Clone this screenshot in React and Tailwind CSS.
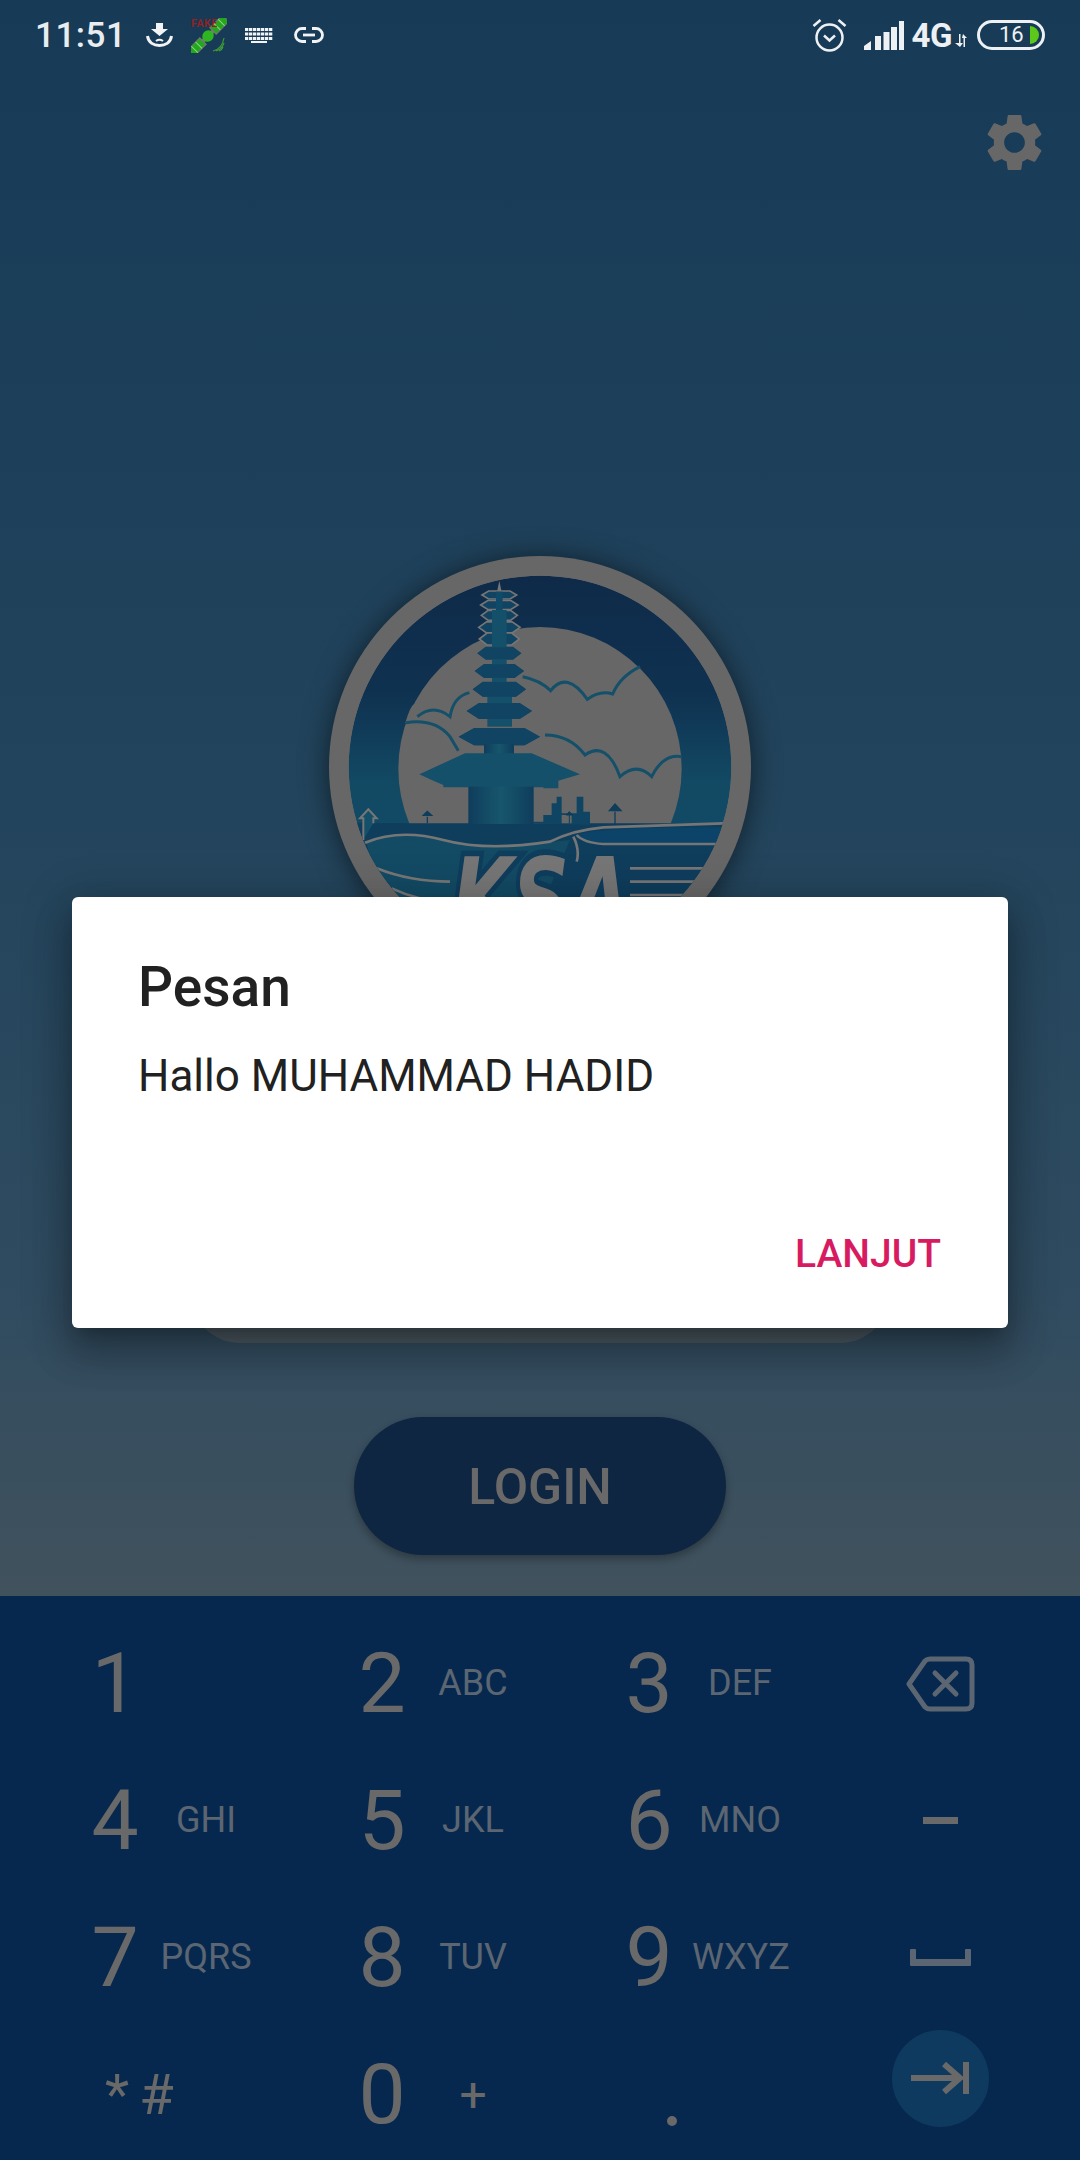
import React from "react";

const GEAR =
  "M19.14 12.94c.04-.3.06-.61.06-.94 0-.32-.02-.64-.07-.94l2.03-1.58c.18-.14.23-.41.12-.61l-1.92-3.32c-.12-.22-.37-.29-.59-.22l-2.39.96c-.5-.38-1.03-.7-1.62-.94l-.36-2.54c-.04-.24-.24-.41-.48-.41h-3.84c-.24 0-.43.17-.47.41l-.36 2.54c-.59.24-1.13.57-1.62.94l-2.39-.96c-.22-.08-.47 0-.59.22L2.74 8.87c-.12.21-.08.47.12.61l2.03 1.58c-.05.3-.09.63-.09.94s.02.64.07.94l-2.03 1.58c-.18.14-.23.41-.12.61l1.92 3.32c.12.22.37.29.59.22l2.39-.96c.5.38 1.03.7 1.62.94l.36 2.54c.05.24.24.41.48.41h3.84c.24 0 .44-.17.47-.41l.36-2.54c.59-.24 1.13-.56 1.62-.94l2.39.96c.22.08.47 0 .59-.22l1.92-3.32c.12-.22.07-.47-.12-.61l-2.01-1.58zM12 15.6c-1.98 0-3.6-1.62-3.6-3.6s1.62-3.6 3.6-3.6 3.6 1.62 3.6 3.6-1.62 3.6-3.6 3.6z";

const TIERS = [
  [165, 52],
  [195, 56],
  [226, 54],
  [262, 62],
  [297, 60],
  [340, 66],
  [393, 74],
  [448, 80],
  [513, 98],
  [590, 122],
];

function DownloadIcon() {
  return (
    <svg width="27" height="24" viewBox="0 0 27 24" className="ml-[20px]">
      <path d="M10 0h7v6h5l-8.500 7L5 6h5z" fill="#f1f3f5" />
      <path d="M1.500 13C2.500 20 8 22.500 13.500 22.500S24.500 20 25.500 13" fill="none" stroke="#f1f3f5" strokeWidth="3" />
      <path d="M10 18q3.500-2.500 7 0" fill="none" stroke="#f1f3f5" strokeWidth="2" />
    </svg>
  );
}

function FakeGpsIcon() {
  return (
    <svg width="36" height="35" viewBox="0 0 36 35" className="ml-[18px]">
      <g transform="rotate(-45 17 18)">
        <rect x="-8" y="13.500" width="18" height="9" fill="#23a81c" stroke="#777" strokeWidth="1" />
        <rect x="24" y="13.500" width="18" height="9" fill="#23a81c" stroke="#777" strokeWidth="1" />
        <path d="M-2 13.500v9M4 13.500v9M30 13.500v9M36 13.500v9" stroke="#8fd98a" strokeWidth="1" />
        <rect x="9" y="16" width="16" height="4" fill="#777" />
        <ellipse cx="17" cy="18" rx="6" ry="5.500" fill="#2fb522" />
      </g>
      <text x="0" y="9" fontSize="10.500" fontWeight="700" letterSpacing="0.600" fill="#8f2222">
        FAKE
      </text>
      <path d="M22 33q9-2 11-13M25 33q6-2 8-8M28 33q3-1 4-4" fill="none" stroke="#3f9a35" strokeWidth="1.200" />
    </svg>
  );
}

function KeyboardIcon() {
  const rows = [0, 4.500, 9];
  return (
    <svg width="28" height="15" viewBox="0 0 28 15" className="ml-[18px]" fill="#f1f3f5">
      {rows.map((y) =>
        [0, 4, 8, 12, 16, 20, 24].map((x) => <rect key={`${x}-${y}`} x={x} y={y} width="3.300" height="3" />)
      )}
      <rect x="6" y="13" width="16" height="2" />
    </svg>
  );
}

function LinkIcon() {
  return (
    <svg width="30" height="16" viewBox="0 0 30 16" className="ml-[21px]" fill="none" stroke="#f1f3f5" strokeWidth="2.800">
      <path d="M12 1.500H8a6.500 6.500 0 0 0 0 13h4" />
      <path d="M18 1.500h4a6.500 6.500 0 0 1 0 13h-4" />
      <path d="M9 8h12" />
    </svg>
  );
}

function AlarmIcon() {
  return (
    <svg width="35" height="34" viewBox="0 0 35 34" fill="none" stroke="#eef1f3" strokeWidth="2.500">
      <circle cx="17.500" cy="19.500" r="13" />
      <path d="M12 17.500l5.500 5 5.500-5" />
      <path d="M1.500 8L8.500 2M26.500 2l7 6" />
    </svg>
  );
}

function SignalIcon() {
  return (
    <svg width="40" height="29" viewBox="0 0 40 29" className="ml-[17px]" fill="#eef1f3">
      <path d="M0 29v-4l7-5v9z" />
      <rect x="11" y="15" width="6" height="14" />
      <rect x="19.500" y="11" width="6" height="18" />
      <rect x="27" y="6" width="6" height="23" />
      <rect x="35" y="0" width="5" height="29" />
    </svg>
  );
}

function TrafficIcon() {
  return (
    <svg width="13" height="13" viewBox="0 0 13 13" className="ml-[3px] mt-[10px]" fill="#eef1f3">
      <path d="M4 0h1.500v9H8l-3 4-5-4h4zM8 0l4 4h-2v9H8.500V4H7z" />
    </svg>
  );
}

function StatusBar() {
  return (
    <div className="flex h-[70px] items-center justify-between pl-[35px] pr-[35px]">
      <div className="flex items-center">
        <span className="text-[35px] font-medium leading-none tracking-[0.5px] text-[#e9edf0]">11:51</span>
        <DownloadIcon />
        <FakeGpsIcon />
        <KeyboardIcon />
        <LinkIcon />
      </div>
      <div className="flex items-center">
        <AlarmIcon />
        <SignalIcon />
        <span className="ml-[8px] text-[33px] font-bold leading-none tracking-[-0.5px] text-[#eef1f3]">4G</span>
        <TrafficIcon />
        <div className="ml-[9px] flex h-[30px] w-[68px] items-center rounded-full border-[3px] border-[#eef1f3] pl-[19px]">
          <span className="text-[22px] leading-none text-[#eef1f3]">16</span>
          <span className="ml-[6px] h-[18px] w-[9px] shrink-0 rounded-r-full bg-[#5cc81a]" />
        </div>
      </div>
    </div>
  );
}

function Logo() {
  return (
    <svg
      width="460"
      height="440"
      viewBox="0 0 1380 1320"
      className="mx-auto drop-shadow-[0_2px_14px_rgba(0,0,0,0.55)]"
    >
      <defs>
        <linearGradient id="sky" x1="0" y1="0" x2="0" y2="1">
          <stop offset="0" stopColor="#0f2a49" />
          <stop offset="0.3" stopColor="#0f3150" />
          <stop offset="0.55" stopColor="#124a64" />
          <stop offset="1" stopColor="#0f4a68" />
        </linearGradient>
        <linearGradient id="tower" x1="0" y1="0" x2="1" y2="0">
          <stop offset="0" stopColor="#0f3d5c" />
          <stop offset="0.5" stopColor="#17566c" />
          <stop offset="1" stopColor="#0f3d5c" />
        </linearGradient>
        <clipPath id="disc">
          <circle cx="690" cy="681" r="574" />
        </clipPath>
      </defs>
      <circle cx="690" cy="681" r="633" fill="#676767" />
      <g clipPath="url(#disc)">
        <circle cx="690" cy="681" r="574" fill="url(#sky)" />
        <circle cx="690" cy="686" r="425" fill="#676767" />
        {/* clouds */}
        <path d="M286 548Q300 500 312 492L345 520 440 470 480 460 480 640 440 632Z" fill="#676767" />
        <path
          d="M288 548Q375 535 420 590L445 632M322 530Q370 490 420 530Q430 470 478 458"
          fill="none"
          stroke="#14506a"
          strokeWidth="9"
        />
        <path
          d="M638 410Q690 420 722 452Q770 390 832 478Q870 450 908 462Q930 410 990 380"
          fill="none"
          stroke="#14506a"
          strokeWidth="9"
        />
        <path
          d="M705 585Q780 585 825 645Q890 600 930 710Q980 665 1025 710Q1060 640 1115 650"
          fill="none"
          stroke="#14506a"
          strokeWidth="9"
        />
        {/* ground */}
        <path d="M190 850L840 850 1240 850 1240 1320 140 1320 140 850Z" fill="#0f3d5c" />
        <path d="M800 885Q860 862 1240 862V908H880Q820 908 800 885Z" fill="#0b4468" />
        <path d="M165 910Q190 900 170 1320H600L780 900Q500 930 380 895Q260 870 165 910Z" fill="#134a64" />
        <path
          d="M165 908Q270 865 400 900T720 905Q790 870 880 862L1240 850M800 885Q820 908 880 912H1220M790 890Q810 930 800 965M960 985L1190 985M200 985Q300 1025 420 1025M960 1025L1170 1025M245 1045Q320 1080 420 1090M960 1065L1150 1065"
          fill="none"
          stroke="#767676"
          strokeWidth="8"
        />
        {/* silhouette on the horizon */}
        <path d="M160 900V835L150 835 175 808 200 835 190 835V850" fill="#14506a" stroke="#767676" strokeWidth="6" />
        <path d="M352 850V830M340 826L352 814 365 826Z" fill="#0f3d5c" stroke="#0f3d5c" strokeWidth="4" />
        <path d="M915 855V815M898 812L915 792 933 812Z" fill="#0f3d5c" stroke="#0f3d5c" strokeWidth="4" />
        <path d="M670 850V845H700V825H725V790H740V770H755V820H800V770H820V815H840V855Z" fill="#0f4462" />
        <path d="M755 825H785V850H755Z" fill="#676767" />
        <path d="M778 850V825M768 825L778 815 788 825Z" fill="#0f3d5c" stroke="#0f3d5c" strokeWidth="3" />
        {/* temple */}
        <path d="M568 122L578 170H558Z" fill="#767676" />
        {TIERS.map(([y, w], i) => (
          <path
            key={y}
            d={`M${568 - w} ${y}L${568 - w * 0.62} ${y - 12 - i * 1.500}H${568 + w * 0.62}L${568 + w} ${y}L${568 + w * 0.62} ${y + 12 + i * 1.500}H${568 - w * 0.62}Z`}
            fill="#114462"
            stroke={i < 5 ? "#767676" : "none"}
            strokeWidth="5"
          />
        ))}
        <rect x="558" y="155" width="20" height="60" fill="#0f4a68" />
        <rect x="546" y="210" width="44" height="220" fill="#14506a" />
        <rect x="532" y="430" width="74" height="130" fill="#14506a" />
        {TIERS.slice(5).map(([y, w], i) => (
          <path
            key={y}
            d={`M${568 - w} ${y}L${568 - w * 0.62} ${y - 18 - i * 2}H${568 + w * 0.62}L${568 + w} ${y}L${568 + w * 0.62} ${y + 18 + i * 2}H${568 - w * 0.62}Z`}
            fill="#114462"
          />
        ))}
        <rect x="522" y="612" width="90" height="40" fill="url(#tower)" />
        <path d="M328 703L465 640H665L810 703L745 722V745H700V742H445V742H400V735L370 722Z" fill="#14506a" />
        <rect x="475" y="740" width="196" height="112" fill="url(#tower)" />
        {/* KSA badge */}
        <text
          x="425"
          y="1190"
          textLength="535"
          lengthAdjust="spacingAndGlyphs"
          fontFamily="DejaVu Sans, sans-serif"
          fontWeight="700"
          fontStyle="italic"
          fontSize="330"
          fill="#767676"
          stroke="#0f3d5c"
          strokeWidth="34"
          paintOrder="stroke"
        >
          KSA
        </text>
      </g>
    </svg>
  );
}

function Digit({ n, label }) {
  return (
    <div className="flex items-center">
      <span className="w-[86px] text-center text-[84px] leading-none text-[#696969]">{n}</span>
      <span className="w-[96px] pb-[2px] text-center text-[36px] leading-none text-[#5b6672]">{label}</span>
    </div>
  );
}

function Backspace() {
  return (
    <svg width="69" height="56" viewBox="0 0 69 56" fill="none" stroke="#5b6672" strokeWidth="5" strokeLinejoin="round" strokeLinecap="round">
      <path d="M3 28L19 5Q21 3 24 3H60Q66 3 66 9V47Q66 53 60 53H24Q21 53 19 51Z" />
      <path d="M29 17L50 38M50 17L29 38" />
    </svg>
  );
}

function Keypad() {
  return (
    <div className="grid h-[564px] grid-cols-[267px_267px_267px_134px] grid-rows-[137px_137px_137px_137px] bg-[#07284e] pl-[72px] pt-[19px]">
      <Digit n="1" />
      <Digit n="2" label="ABC" />
      <Digit n="3" label="DEF" />
      <div className="flex items-center justify-center">
        <Backspace />
      </div>

      <Digit n="4" label="GHI" />
      <Digit n="5" label="JKL" />
      <Digit n="6" label="MNO" />
      <div className="flex items-center justify-center">
        <div className="h-[7px] w-[35px] bg-[#696969]" />
      </div>

      <Digit n="7" label="PQRS" />
      <Digit n="8" label="TUV" />
      <Digit n="9" label="WXYZ" />
      <div className="flex items-center justify-center">
        <svg width="61" height="17" viewBox="0 0 61 17" fill="#5b6672">
          <path d="M0 1q0-1 1-1h4q1 0 1 1v9h49V1q0-1 1-1h4q1 0 1 1v15q0 1-1 1H1q-1 0-1-1z" />
        </svg>
      </div>

      <div className="flex items-center pl-[33px] text-[56px] leading-none text-[#696969]">
        <span>*</span>
        <span className="ml-[10px]">#</span>
      </div>
      <div className="flex items-center">
        <span className="w-[86px] text-center text-[84px] leading-none text-[#696969]">0</span>
        <span className="w-[96px] text-center text-[48px] leading-none text-[#696969]">+</span>
      </div>
      <div className="flex items-center pl-[61px] pt-[52px]">
        <span className="h-[10px] w-[10px] rounded-full bg-[#696969]" />
      </div>
      <div className="flex items-center justify-center pb-[33px]">
        <div className="flex h-[97px] w-[97px] items-center justify-center rounded-full bg-[#0e3a5f]">
          <svg width="58" height="32" viewBox="0 0 58 32" fill="none" stroke="#696969" strokeWidth="6">
            <path d="M0 16H48M33 2L49 16L33 30" />
            <path d="M55 0V32" />
          </svg>
        </div>
      </div>
    </div>
  );
}

function MessageDialog() {
  return (
    <div className="absolute left-[72px] top-[897px] flex h-[431px] w-[936px] flex-col rounded-[6px] bg-white pb-[54px] pl-[66px] pr-[67px] pt-[58px] shadow-[0_24px_38px_3px_rgba(0,0,0,0.2),0_9px_46px_8px_rgba(0,0,0,0.18),0_11px_15px_-7px_rgba(0,0,0,0.2)]">
      <h2 className="text-[55px] font-medium leading-[64px] text-[#212121]">Pesan</h2>
      <p className="mt-[27px] text-[44px] leading-[60px] text-[#212121]">Hallo MUHAMMAD HADID</p>
      <button className="ml-auto mt-auto text-[39px] font-medium leading-[40px] text-[#d81b60]">LANJUT</button>
    </div>
  );
}

export default function App() {
  return (
    <div className="relative h-[2160px] w-[1080px] overflow-hidden font-[Roboto,sans-serif]">
      <div className="h-[1596px] bg-[linear-gradient(to_bottom,#173a57_0%,#22445c_50%,#2f4b60_80%,#41525d_100%)]">
        <StatusBar />
        <div className="mt-[38px] flex justify-end pr-[31px]">
          <svg width="69" height="69" viewBox="0 0 24 24" fill="#676767">
            <path d={GEAR} />
          </svg>
        </div>
        <div className="mt-[363px]">
          <Logo />
        </div>
        <div className="mx-auto mt-[233px] h-[130px] w-[700px] rounded-[50px] bg-[#4c5a62]" />
        <div className="mx-auto mt-[74px] flex h-[138px] w-[372px] items-center justify-center rounded-full bg-[#0f2642] pt-[3px] text-[50px] font-medium text-[#696969] shadow-[0_4px_8px_rgba(0,0,0,0.3)]">
          LOGIN
        </div>
      </div>
      <Keypad />
      <MessageDialog />
    </div>
  );
}
